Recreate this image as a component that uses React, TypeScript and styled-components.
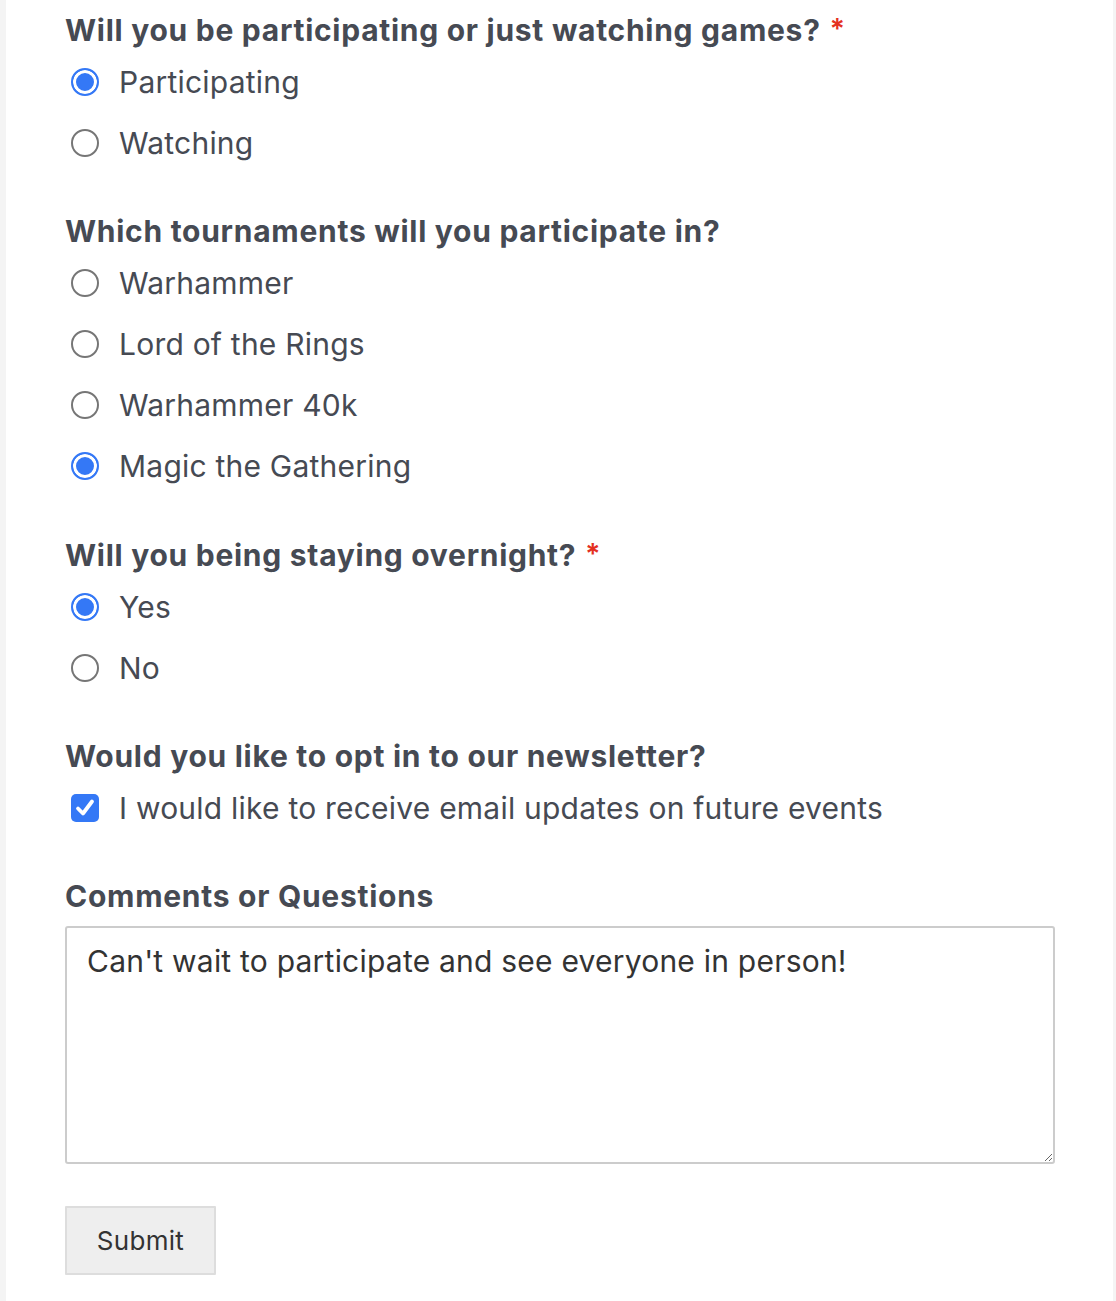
import React from 'react';
import styled, { createGlobalStyle } from 'styled-components';

const GlobalStyle = createGlobalStyle`
  html, body {
    margin: 0;
    padding: 0;
    background: #f4f4f4;
  }
  body {
    font-family: Inter, "Noto Sans", "Liberation Sans", sans-serif;
  }
`;

const textColor = '#464a53';
const blue = '#3478f6';

const Page = styled.div`
  background: #ffffff;
  margin: 0 3px 0 6px;
  min-height: 1301px;
  padding: 8px 58px 0 59px;
  box-sizing: border-box;
`;

const Field = styled.div`
  margin-bottom: 37px;
`;

const Heading = styled.div`
  font-size: 30px;
  line-height: 42px;
  font-weight: 700;
  color: ${textColor};
  letter-spacing: 0.72px;
`;

const Required = styled.span`
  color: #e4311f;
  font-weight: 600;
  margin-left: 9px;
  font-size: 28px;
  vertical-align: 2px;
`;

const OptionRow = styled.label`
  display: flex;
  align-items: center;
  height: 61px;
  gap: 20px;
  padding-left: 6px;
  font-size: 30px;
  letter-spacing: 0.22px;
  color: ${textColor};
  cursor: pointer;
`;

const Radio = styled.span<{ $checked?: boolean }>`
  flex: none;
  width: 28px;
  height: 28px;
  border-radius: 50%;
  box-sizing: border-box;
  border: 2px solid ${({ $checked }) => ($checked ? blue : '#767676')};
  background: ${({ $checked }) => ($checked ? blue : '#fff')};
  box-shadow: ${({ $checked }) => ($checked ? 'inset 0 0 0 3px #fff' : 'none')};
`;

const Check = styled.span`
  flex: none;
  width: 28px;
  height: 28px;
  border-radius: 5px;
  background: ${blue};
  display: flex;
  align-items: center;
  justify-content: center;
`;

const CommentsHeading = styled(Heading)`
  margin-bottom: 9px;
`;

const TextArea = styled.textarea`
  display: block;
  width: 100%;
  height: 238px;
  box-sizing: border-box;
  border: 2px solid #cccccc;
  border-radius: 3px;
  padding: 13px 20px;
  font-family: Inter, "Noto Sans", "Liberation Sans", sans-serif;
  font-size: 30px;
  line-height: 40px;
  letter-spacing: 0.22px;
  color: #333333;
  outline: none;
  resize: vertical;
`;

const SubmitButton = styled.button`
  margin-top: 42px;
  width: 151px;
  height: 69px;
  background: #eeeeee;
  border: 2px solid #dddddd;
  border-radius: 1px;
  font-family: Inter, "Noto Sans", "Liberation Sans", sans-serif;
  font-size: 26px;
  letter-spacing: 0.3px;
  color: #333333;
  cursor: pointer;
`;

type Group = {
  title: string;
  required?: boolean;
  options: string[];
  selected: string;
};

const groups: Group[] = [
  {
    title: 'Will you be participating or just watching games?',
    required: true,
    options: ['Participating', 'Watching'],
    selected: 'Participating',
  },
  {
    title: 'Which tournaments will you participate in?',
    options: ['Warhammer', 'Lord of the Rings', 'Warhammer 40k', 'Magic the Gathering'],
    selected: 'Magic the Gathering',
  },
  {
    title: 'Will you being staying overnight?',
    required: true,
    options: ['Yes', 'No'],
    selected: 'Yes',
  },
];

const App = () => {
  return (
    <>
      <GlobalStyle />
      <Page>
        {groups.map((group) => (
          <Field key={group.title}>
            <Heading>
              {group.title}
              {group.required && <Required>*</Required>}
            </Heading>
            {group.options.map((option) => (
              <OptionRow key={option}>
                <Radio $checked={option === group.selected} />
                {option}
              </OptionRow>
            ))}
          </Field>
        ))}
        <Field>
          <Heading>Would you like to opt in to our newsletter?</Heading>
          <OptionRow>
            <Check>
              <svg width="22" height="22" viewBox="0 0 22 22">
                <path
                  d="M4 11.5 L9 16.5 L18 4.5"
                  fill="none"
                  stroke="#fff"
                  strokeWidth="3.8"
                  strokeLinecap="round"
                  strokeLinejoin="round"
                />
              </svg>
            </Check>
            I would like to receive email updates on future events
          </OptionRow>
        </Field>
        <CommentsHeading>Comments or Questions</CommentsHeading>
        <TextArea defaultValue="Can't wait to participate and see everyone in person!" />
        <SubmitButton>Submit</SubmitButton>
      </Page>
    </>
  );
};

export default App;
